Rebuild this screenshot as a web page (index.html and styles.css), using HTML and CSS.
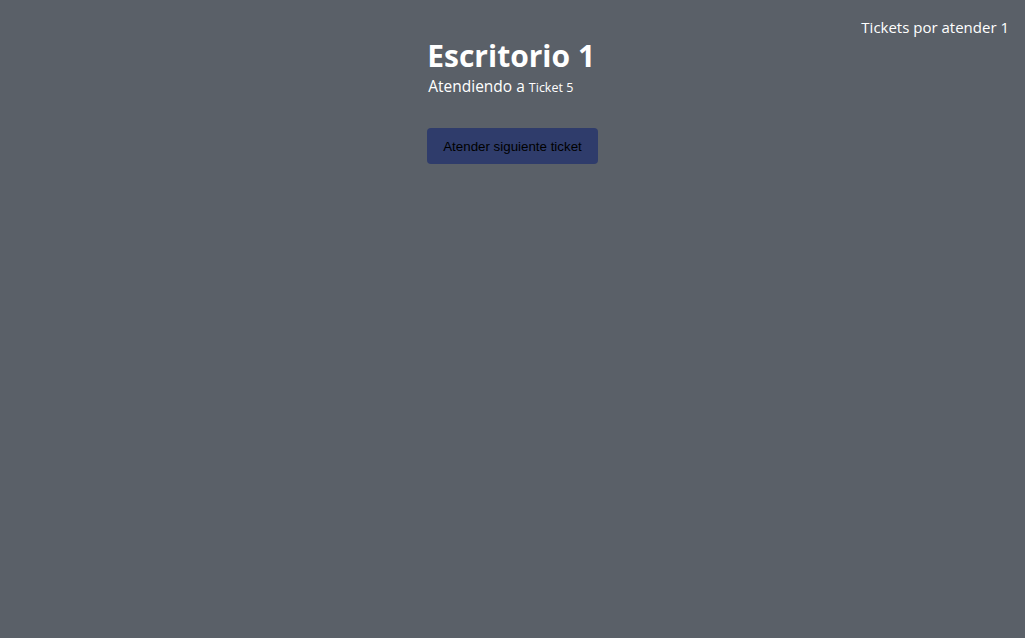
FILE: index.html
```html
<!DOCTYPE html>
<html lang="es">
<head>
<meta charset="utf-8">
<title>Escritorio</title>
<link rel="stylesheet" href="styles.css">
</head>
<body>
<header class="topbar">
  <span class="pending">Tickets por atender 1</span>
</header>
<main class="desk">
  <div class="desk-inner">
    <h1 class="desk-title">Escritorio 1</h1>
    <p class="desk-status">Atendiendo a <small class="ticket">Ticket 5</small></p>
    <button class="next-btn" type="button">Atender siguiente ticket</button>
  </div>
</main>
</body>
</html>
```
FILE: styles.css
```css
html, body {
  margin: 0;
  padding: 0;
  height: 100%;
}
body {
  background: #5a6068;
  color: #ffffff;
  font-family: "Open Sans", "Noto Sans", sans-serif;
}
.topbar {
  display: flex;
  justify-content: flex-end;
  padding: 16px 16px 0 0;
  height: 22px;
}
.pending {
  font-size: 15px;
  line-height: 22px;
}
.desk {
  display: flex;
  justify-content: center;
}
.desk-inner {
  display: flex;
  flex-direction: column;
  align-items: flex-start;
}
.desk-title {
  margin: 0;
  font-size: 30px;
  font-weight: 700;
  line-height: 36px;
}
.desk-status {
  margin: 2px 0 0 1px;
  font-size: 15.5px;
  line-height: 20px;
}
.ticket {
  font-size: 12.5px;
}
.next-btn {
  margin-top: 30px;
  height: 36px;
  padding: 0 16px;
  background: #2f3c6b;
  color: #000000;
  border: none;
  border-radius: 4px;
  font-family: "Liberation Sans", Arial, sans-serif;
  font-size: 13.33px;
}
```
